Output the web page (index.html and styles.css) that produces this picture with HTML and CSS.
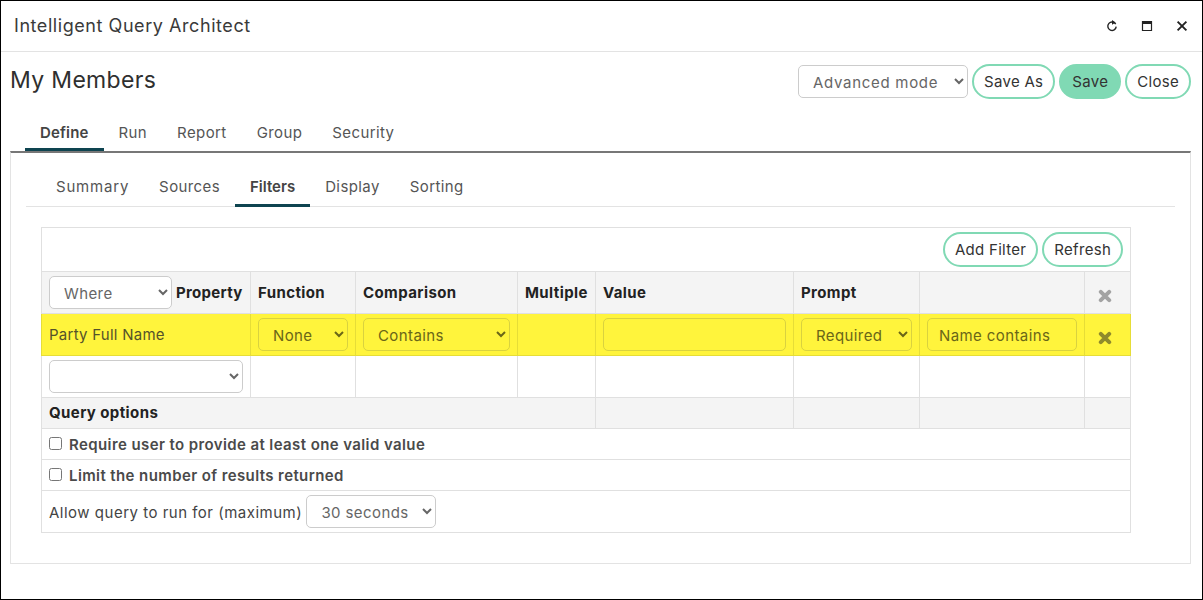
FILE: index.html
```html
<!DOCTYPE html>
<html lang="en">
<head>
<meta charset="utf-8">
<title>Intelligent Query Architect</title>
<link rel="stylesheet" href="styles.css">
</head>
<body>
<div class="window">
  <header class="titlebar">
    <span class="title">Intelligent Query Architect</span>
    <div class="win-icons">
      <svg class="wi" viewBox="0 0 12 12"><path d="M9.7 4.2A4.2 4.2 0 1 0 10.2 6.6" fill="none" stroke="#222" stroke-width="1.4"/><path d="M6 0.2V5L9.6 2.6Z" fill="#222" transform="translate(0 -0.2)"/></svg>
      <svg class="wi" viewBox="0 0 12 12"><path d="M1.5 1.5H10.5V10.5H1.5Z" fill="none" stroke="#222" stroke-width="1.2"/><rect x="1" y="1" width="10" height="3" fill="#222"/></svg>
      <svg class="wi" viewBox="0 0 12 12"><path d="M1.6 1.6L10.4 10.4M10.4 1.6L1.6 10.4" fill="none" stroke="#222" stroke-width="1.9"/></svg>
    </div>
  </header>
  <div class="page">
    <div class="page-head">
      <h1 class="page-title">My Members</h1>
      <div class="actions">
        <select class="sel sel-mode"><option>Advanced mode</option></select>
        <button class="btn">Save As</button>
        <button class="btn btn-primary">Save</button>
        <button class="btn">Close</button>
      </div>
    </div>
    <nav class="tabs main-tabs">
      <a class="tab tab-active">Define</a>
      <a class="tab">Run</a>
      <a class="tab">Report</a>
      <a class="tab">Group</a>
      <a class="tab">Security</a>
    </nav>
    <section class="panel">
      <nav class="tabs sub-tabs">
        <a class="tab tab-wide">Summary</a>
        <a class="tab">Sources</a>
        <a class="tab tab-active">Filters</a>
        <a class="tab">Display</a>
        <a class="tab">Sorting</a>
      </nav>
      <table class="grid">
        <colgroup>
          <col class="c1"><col class="c2"><col class="c3"><col class="c4"><col class="c5"><col class="c6"><col class="c7"><col class="c8">
        </colgroup>
        <tr class="r-tools">
          <td colspan="8"><div class="tools"><button class="btn">Add Filter</button><button class="btn">Refresh</button></div></td>
        </tr>
        <tr class="r-head">
          <th><select class="sel sel-where"><option>Where</option></select> <span class="prop">Property</span></th>
          <th>Function</th>
          <th>Comparison</th>
          <th>Multiple</th>
          <th>Value</th>
          <th>Prompt</th>
          <th></th>
          <th class="x-cell"><svg class="x x-grey" viewBox="0 0 14 14"><path d="M2.8 2.8L11.2 11.2M11.2 2.8L2.8 11.2" stroke-width="4" stroke-linecap="round"/></svg></th>
        </tr>
        <tr class="r-row">
          <td>Party Full Name</td>
          <td><select class="sel sel-fill"><option>None</option></select></td>
          <td><select class="sel sel-fill"><option>Contains</option></select></td>
          <td></td>
          <td><input class="inp" type="text"></td>
          <td><select class="sel sel-fill"><option>Required</option></select></td>
          <td><input class="inp" type="text" value="Name contains"></td>
          <td class="x-cell"><svg class="x x-olive" viewBox="0 0 14 14"><path d="M2.8 2.8L11.2 11.2M11.2 2.8L2.8 11.2" stroke-width="4" stroke-linecap="round"/></svg></td>
        </tr>
        <tr class="r-add">
          <td><select class="sel sel-fill"><option></option></select></td>
          <td></td><td></td><td></td><td></td><td></td><td></td><td></td>
        </tr>
        <tr class="r-opts">
          <th colspan="4">Query options</th>
          <th></th><th></th><th></th><th></th>
        </tr>
        <tr class="r-check">
          <td colspan="8"><label class="chk"><input type="checkbox">Require user to provide at least one valid value</label></td>
        </tr>
        <tr class="r-check">
          <td colspan="8"><label class="chk"><input type="checkbox">Limit the number of results returned</label></td>
        </tr>
        <tr class="r-run">
          <td colspan="8"><span class="run-label">Allow query to run for (maximum)</span> <select class="sel sel-time"><option>30 seconds</option></select></td>
        </tr>
      </table>
    </section>
  </div>
</div>
</body>
</html>
```
FILE: styles.css
```css
* { box-sizing: border-box; }
html, body { margin: 0; height: 100%; background: #fff; }
body { font-family: "Inter", "Liberation Sans", sans-serif; font-size: 15px; color: #444; }
.window { width: 1203px; height: 600px; border: 1px solid #000; display: flex; flex-direction: column; overflow: hidden; }
.titlebar { height: 51px; flex: none; border-bottom: 1px solid #e3e3e3; display: flex; align-items: center; justify-content: space-between; padding: 0 14px 0 13px; }
.title { font-size: 18px; color: #3a3a3a; letter-spacing: 0.56px; margin-bottom: 1px; }
.win-icons { display: flex; gap: 23px; }
.wi { width: 12px; height: 12px; display: block; }
.page { padding: 0 9px; flex: 1; display: flex; flex-direction: column; }
.page-head { height: 65px; display: flex; justify-content: space-between; align-items: flex-start; padding: 12px 2px 0 0; }
.page-title { margin: 0; font-size: 23px; font-weight: 400; line-height: 32px; color: #2f2f2f; letter-spacing: 0.33px; }
.actions { display: flex; gap: 4px; align-items: flex-start; }
.sel { height: 33px; border: 1px solid #ccc; border-radius: 5px; background: #fff; color: #666; font: inherit; font-size: 15px; letter-spacing: 0.4px; padding: 2px 10px 0; }
.sel-mode { width: 170px; margin: 1px 0 0; letter-spacing: 0.7px; }
.btn { height: 35px; border: 2px solid #80d9b4; border-radius: 18px; background: #fff; color: #333; font: inherit; font-size: 15px; letter-spacing: 0.3px; padding: 0 10px; }
.btn-primary { background: #80d9b4; padding: 0 11px; }
.tabs { display: flex; }
.tab { display: block; padding: 0 15px; color: #555; letter-spacing: 0.4px; }
.main-tabs { height: 35px; padding-left: 15px; flex: none; }
.main-tabs .tab { line-height: 32px; height: 34px; }
.tab-active { font-weight: 600; color: #444; border-bottom: 3px solid #0e4450; }
.main-tabs .tab-active { letter-spacing: 0.15px; }
.panel { width: 1181px; height: 413px; border: 1px solid #e3e3e3; border-top: 2px solid #777; margin-top: -1px; padding: 0 15px; flex: none; }
.sub-tabs { height: 54px; padding: 17px 0 0 15px; border-bottom: 1px solid #e3e3e3; }
.sub-tabs .tab { line-height: 33px; height: 37px; letter-spacing: 0.4px; }
.sub-tabs .tab-wide { letter-spacing: 0.8px; }
.sub-tabs .tab-active { letter-spacing: 0; }
.grid { table-layout: fixed; border-collapse: collapse; width: 1089px; margin: 20px 0 0 15px; }
.c1 { width: 209px; } .c2 { width: 105px; } .c3 { width: 162px; } .c4 { width: 78px; } .c5 { width: 198px; } .c6 { width: 126px; } .c7 { width: 165px; } .c8 { width: 46px; }
.grid td, .grid th { border: 1px solid #e0e0e0; padding: 0 7px; text-align: left; vertical-align: middle; white-space: nowrap; }
.grid th { font-weight: 700; color: #222; background: #f4f4f4; letter-spacing: 0.4px; }
.r-tools { height: 44px; }
.tools { display: flex; justify-content: flex-end; gap: 4px; }
.tools .btn { height: 35px; }
.r-head, .r-row, .r-add { height: 42px; }
.r-row td { background: #fff43c; border-color: #e6dd37; color: #55522a; letter-spacing: 0.25px; }
.r-row .sel, .r-row .inp { background: #fff43c; border-color: #d9d23f; color: #6a6618; }
.sel-where { width: 123px; vertical-align: middle; font-weight: 400; }
.prop { vertical-align: middle; letter-spacing: 0.3px; }
.sel-fill { width: 100%; }
.inp { width: 100%; height: 33px; border: 1px solid #ccc; border-radius: 5px; font: inherit; letter-spacing: 0.4px; padding: 1px 11px 0; display: block; }
.x-cell { text-align: center !important; padding: 5px 5px 0 0 !important; }
.x { width: 14px; height: 14px; vertical-align: middle; fill: none; }
.x-grey { stroke: #a3a3a3; }
.x-olive { stroke: #8f8a2c; }
.r-opts { height: 31px; }
.r-opts th { padding-bottom: 2px; }
.r-check { height: 31px; }
.chk { display: flex; align-items: center; font-weight: 600; color: #4a4a4a; letter-spacing: 0.4px; }
.chk input { width: 13px; height: 13px; margin: 0 7px 2px 0; }
.r-run { height: 42px; }
.run-label { letter-spacing: 0.5px; vertical-align: middle; display: inline-block; padding-top: 2px; }
.sel-time { width: 130px; vertical-align: middle; }
```
